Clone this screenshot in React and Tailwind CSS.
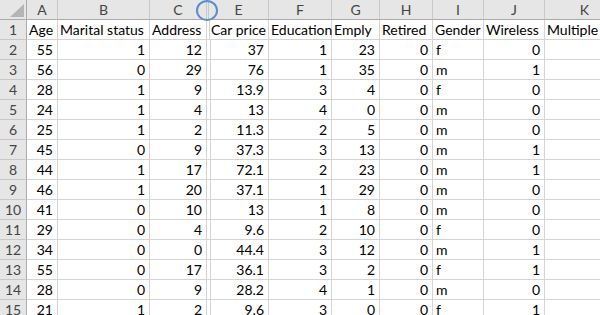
import React from "react";

const cols = [
  { w: 31, key: "A" },
  { w: 92, key: "B" },
  { w: 57, key: "C" },
  { w: 2, key: "D", hidden: true },
  { w: 60, key: "E" },
  { w: 63, key: "F" },
  { w: 48, key: "G" },
  { w: 53, key: "H" },
  { w: 51, key: "I" },
  { w: 61, key: "J" },
  { w: 80, key: "K" },
];

const header = ["Age", "Marital status", "Address", "", "Car price", "Education", "Emply", "Retired", "Gender", "Wireless", "Multiple"];

const data = [
  [55, 1, 12, 37, 1, 23, 0, "f", 0],
  [56, 0, 29, 76, 1, 35, 0, "m", 1],
  [28, 1, 9, 13.9, 3, 4, 0, "f", 0],
  [24, 1, 4, 13, 4, 0, 0, "m", 0],
  [25, 1, 2, 11.3, 2, 5, 0, "m", 0],
  [45, 0, 9, 37.3, 3, 13, 0, "m", 1],
  [44, 1, 17, 72.1, 2, 23, 0, "m", 1],
  [46, 1, 20, 37.1, 1, 29, 0, "m", 0],
  [41, 0, 10, 13, 1, 8, 0, "m", 0],
  [29, 0, 4, 9.6, 2, 10, 0, "f", 0],
  [34, 0, 0, 44.4, 3, 12, 0, "m", 1],
  [55, 0, 17, 36.1, 3, 2, 0, "f", 1],
  [28, 0, 9, 28.2, 4, 1, 0, "m", 0],
  [21, 1, 2, 9.6, 3, 0, 0, "f", 1],
];

const gridCols = "27px 31px 92px 57px 2px 60px 63px 48px 53px 51px 61px 80px";

export default function App() {
  return (
    <div
      className="relative w-[600px] h-[315px] overflow-hidden bg-white text-[14px] leading-none"
      style={{ fontFamily: "Lato, 'Open Sans', sans-serif" }}
    >
      <div className="grid auto-rows-[20px]" style={{ gridTemplateColumns: gridCols }}>
        <div className="relative bg-[#e6e6e6] border-r border-b border-[#ababab]">
          <svg className="absolute left-0 top-0" width="26" height="19">
            <polygon points="10,17 24,17 24,4" fill="#b5b5b5" />
          </svg>
        </div>
        {cols.map((c) => (
          <div
            key={c.key}
            className="flex items-center justify-center pt-[1px] bg-[#e6e6e6] border-r border-b border-r-[#c8c8c8] border-b-[#ababab] text-[#444]"
          >
            {c.hidden ? "" : c.key}
          </div>
        ))}

        <div className="flex items-center justify-center pt-[1px] bg-[#e6e6e6] border-r border-b border-r-[#ababab] border-b-[#c8c8c8] text-[#444]">1</div>
        {header.map((h, i) => (
          <div
            key={i}
            className="flex items-center pl-[2px] pt-[1px] border-r border-b border-[#d4d4d4] whitespace-nowrap overflow-visible text-black"
          >
            {h}
          </div>
        ))}

        {data.map((row, r) => {
          const cells = [row[0], row[1], row[2], "", row[3], row[4], row[5], row[6], row[7], row[8], ""];
          return (
            <React.Fragment key={r}>
              <div className="flex items-center justify-center pt-[1px] bg-[#e6e6e6] border-r border-b border-r-[#ababab] border-b-[#c8c8c8] text-[#444]">
                {r + 2}
              </div>
              {cells.map((v, i) => {
                const isText = typeof v === "string";
                return (
                  <div
                    key={i}
                    className={
                      "flex items-center pt-[1px] border-r border-b border-[#d4d4d4] text-black " +
                      (isText ? "justify-start pl-[3px]" : "justify-end pr-[4px]")
                    }
                  >
                    {v}
                  </div>
                );
              })}
            </React.Fragment>
          );
        })}
      </div>

      <svg className="absolute left-[195px] top-0" width="24" height="22">
        <ellipse cx="12" cy="10.5" rx="10" ry="9.5" fill="none" stroke="#5b8bd0" strokeWidth="2" />
      </svg>
    </div>
  );
}
